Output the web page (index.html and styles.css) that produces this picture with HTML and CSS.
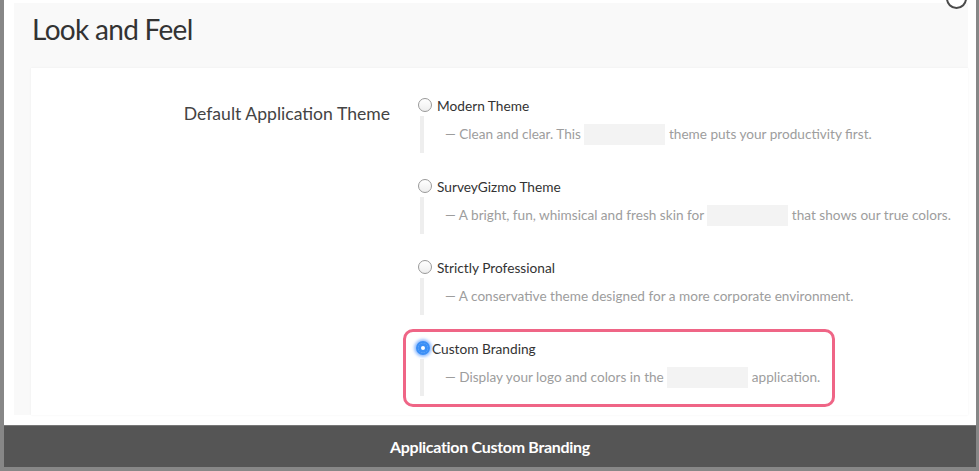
FILE: index.html
```html
<!DOCTYPE html>
<html lang="en">
  <head>
    <meta charset="UTF-8" />
    <meta name="viewport" content="width=device-width,initial-scale=1.0" />
    <title>Look and Feel</title>
    <link rel="stylesheet" href="styles.css">
  </head>
  <body>
    <div class="modal">
      <span class="close-button"></span>
      <div class="panel">
        <h1 class="panel-title">Look and Feel</h1>
        <div class="card">
          <div class="field-label">Default Application Theme</div>
          <div class="options">
            <div class="option">
              <div class="option-label"><span class="radio"></span>Modern Theme</div>
              <div class="option-desc">— Clean and clear. This <span class="blank"></span> theme puts your productivity first.</div>
            </div>
            <div class="option">
              <div class="option-label"><span class="radio"></span>SurveyGizmo Theme</div>
              <div class="option-desc">— A bright, fun, whimsical and fresh skin for <span class="blank"></span> that shows our true colors.</div>
            </div>
            <div class="option">
              <div class="option-label"><span class="radio"></span>Strictly Professional</div>
              <div class="option-desc">— A conservative theme designed for a more corporate environment.</div>
            </div>
            <div class="option highlight">
              <div class="option-label"><span class="radio checked"></span>Custom Branding</div>
              <div class="option-desc">— Display your logo and colors in the <span class="blank"></span> application.</div>
            </div>
          </div>
        </div>
      </div>
    </div>
    <div class="caption">Application Custom Branding</div>
  </body>
</html>
```

FILE: styles.css
```css
body {
  margin: 0;
  background-color: #878787;
  font-family: Lato, "Open Sans", sans-serif;
  height: 471px;
  overflow: hidden;
}
.modal {
  position: relative;
  box-sizing: border-box;
  margin: 0 3px 0 4px;
  padding-top: 3px;
  height: 425px;
  background-color: #fff;
}
.close-button {
  position: absolute;
  top: -12px;
  right: 9px;
  width: 17px;
  height: 17px;
  border: 2px solid #4a4a4a;
  border-radius: 50%;
  background-color: #fff;
}
.panel {
  margin: 0 8px 0 10px;
  height: 412px;
  padding-left: 17px;
  background-color: #f9f9f9;
  display: flex;
  flex-direction: column;
}
.panel-title {
  flex-shrink: 0;
  margin: 0;
  height: 65px;
  padding-left: 1px;
  font-size: 28px;
  font-weight: normal;
  line-height: 53px;
  color: #333;
  letter-spacing: -0.7px;
}
.card {
  flex: 1;
  min-height: 0;
  overflow: hidden;
  background-color: #fff;
  box-shadow: 0 0 2px rgba(0, 0, 0, 0.06);
  display: flex;
  padding-top: 26px;
}
.field-label {
  width: 359px;
  text-align: right;
  font-size: 17.6px;
  color: #444;
  padding-top: 9px;
  line-height: 22px;
}
.options {
  margin-left: 28px;
}
.option {
  margin-bottom: 22px;
}
.option-label {
  height: 22px;
  display: flex;
  align-items: center;
  font-size: 13.7px;
  color: #333;
}
.radio {
  width: 12px;
  height: 12px;
  border: 1px solid #999;
  border-radius: 50%;
  background: linear-gradient(#fff, #eee);
  margin-right: 5px;
}
.radio.checked {
  width: 10px;
  height: 10px;
  border: 2px solid #3b8ff6;
  background: #3b8ff6;
  box-shadow: 0 0 3px 2px rgba(80, 150, 255, 0.6), inset 0 0 0 3px #3b8ff6, inset 0 0 0 5px #fff;
  margin-left: -2px;
  margin-right: 2px;
}
.option-desc {
  margin-left: 2px;
  border-left: 4px solid #eee;
  padding: 8px 0 8px 21px;
  line-height: 21px;
  font-size: 13.6px;
  color: #9d9d9d;
}
.blank {
  display: inline-block;
  width: 81px;
  height: 21px;
  vertical-align: top;
  background-color: #f3f3f3;
}
.highlight {
  position: relative;
}
.highlight::after {
  content: "";
  position: absolute;
  left: -15px;
  top: -8px;
  width: 426px;
  height: 72px;
  border: 3px solid #ef6586;
  border-radius: 10px;
}
.caption {
  margin: 0 3px 0 4px;
  height: 41px;
  border-top: 1px solid #777;
  background-color: #555;
  color: #fff;
  text-align: center;
  font-weight: bold;
  font-size: 16px;
  line-height: 41px;
  letter-spacing: -0.3px;
}
```
